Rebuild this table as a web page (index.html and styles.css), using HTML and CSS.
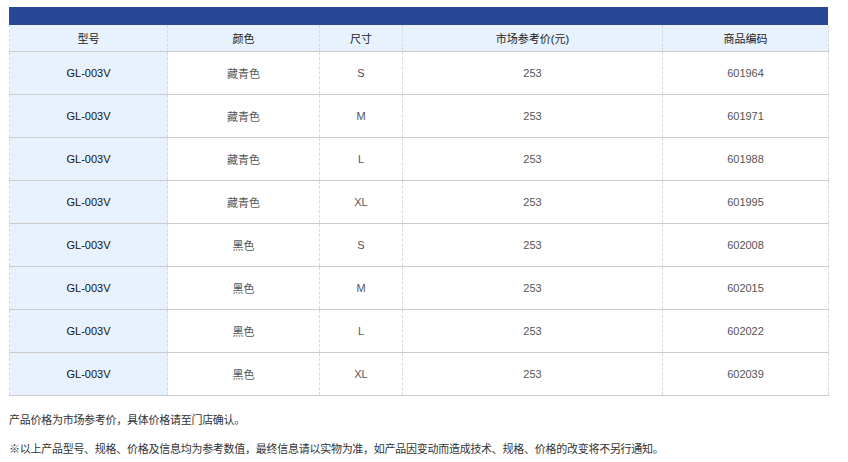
FILE: index.html
```html
<!DOCTYPE html>
<html lang="zh-CN">
<head>
<meta charset="utf-8">
<link rel="stylesheet" href="styles.css">
</head>
<body>
<div class="wrap">
  <div class="bar"></div>
  <table class="spec">
    <colgroup>
      <col class="c1"><col class="c2"><col class="c3"><col class="c4"><col class="c5">
    </colgroup>
    <thead>
      <tr><th>型号</th><th>颜色</th><th>尺寸</th><th>市场参考价(元)</th><th>商品编码</th></tr>
    </thead>
    <tbody>
      <tr><td class="model">GL-003V</td><td>藏青色</td><td>S</td><td>253</td><td>601964</td></tr>
      <tr><td class="model">GL-003V</td><td>藏青色</td><td>M</td><td>253</td><td>601971</td></tr>
      <tr><td class="model">GL-003V</td><td>藏青色</td><td>L</td><td>253</td><td>601988</td></tr>
      <tr><td class="model">GL-003V</td><td>藏青色</td><td>XL</td><td>253</td><td>601995</td></tr>
      <tr><td class="model">GL-003V</td><td>黑色</td><td>S</td><td>253</td><td>602008</td></tr>
      <tr><td class="model">GL-003V</td><td>黑色</td><td>M</td><td>253</td><td>602015</td></tr>
      <tr><td class="model">GL-003V</td><td>黑色</td><td>L</td><td>253</td><td>602022</td></tr>
      <tr><td class="model">GL-003V</td><td>黑色</td><td>XL</td><td>253</td><td>602039</td></tr>
    </tbody>
  </table>
  <p class="note first">产品价格为市场参考价，具体价格请至门店确认。</p>
  <p class="note">※以上产品型号、规格、价格及信息均为参考数值，最终信息请以实物为准，如产品因变动而造成技术、规格、价格的改变将不另行通知。</p>
</div>
</body>
</html>
```
FILE: styles.css
```css
html, body {
  margin: 0;
  padding: 0;
  background: #ffffff;
}
body {
  font-family: "Liberation Sans", Arial, "Noto Sans CJK SC", sans-serif;
  font-size: 11px;
  color: #333;
}
.wrap {
  padding: 7px 0 0 9px;
  width: 819px;
}
.bar {
  height: 18px;
  background: #284796;
}
.spec {
  width: 819px;
  border-collapse: collapse;
  table-layout: fixed;
}
.c1 { width: 158px; }
.c2 { width: 152px; }
.c3 { width: 83px; }
.c4 { width: 260px; }
.c5 { width: 166px; }
.spec th,
.spec td {
  text-align: center;
  vertical-align: middle;
  padding: 0;
  border-left: 1px dashed #d9d9d9;
  border-right: 1px dashed #d9d9d9;
  border-bottom: 1px solid #cccccc;
}
.spec th {
  height: 26px;
  font-weight: normal;
  color: #222;
  background: #e8f2fe;
}
.spec td {
  height: 42px;
  color: #555;
}
.spec td.model {
  background: #e8f2fe;
  color: #111;
}
.note {
  margin: 11px 0 0 0;
  line-height: 18px;
  color: #333;
  white-space: nowrap;
  letter-spacing: -0.27px;
}
.note.first {
  margin-top: 15px;
}
```
